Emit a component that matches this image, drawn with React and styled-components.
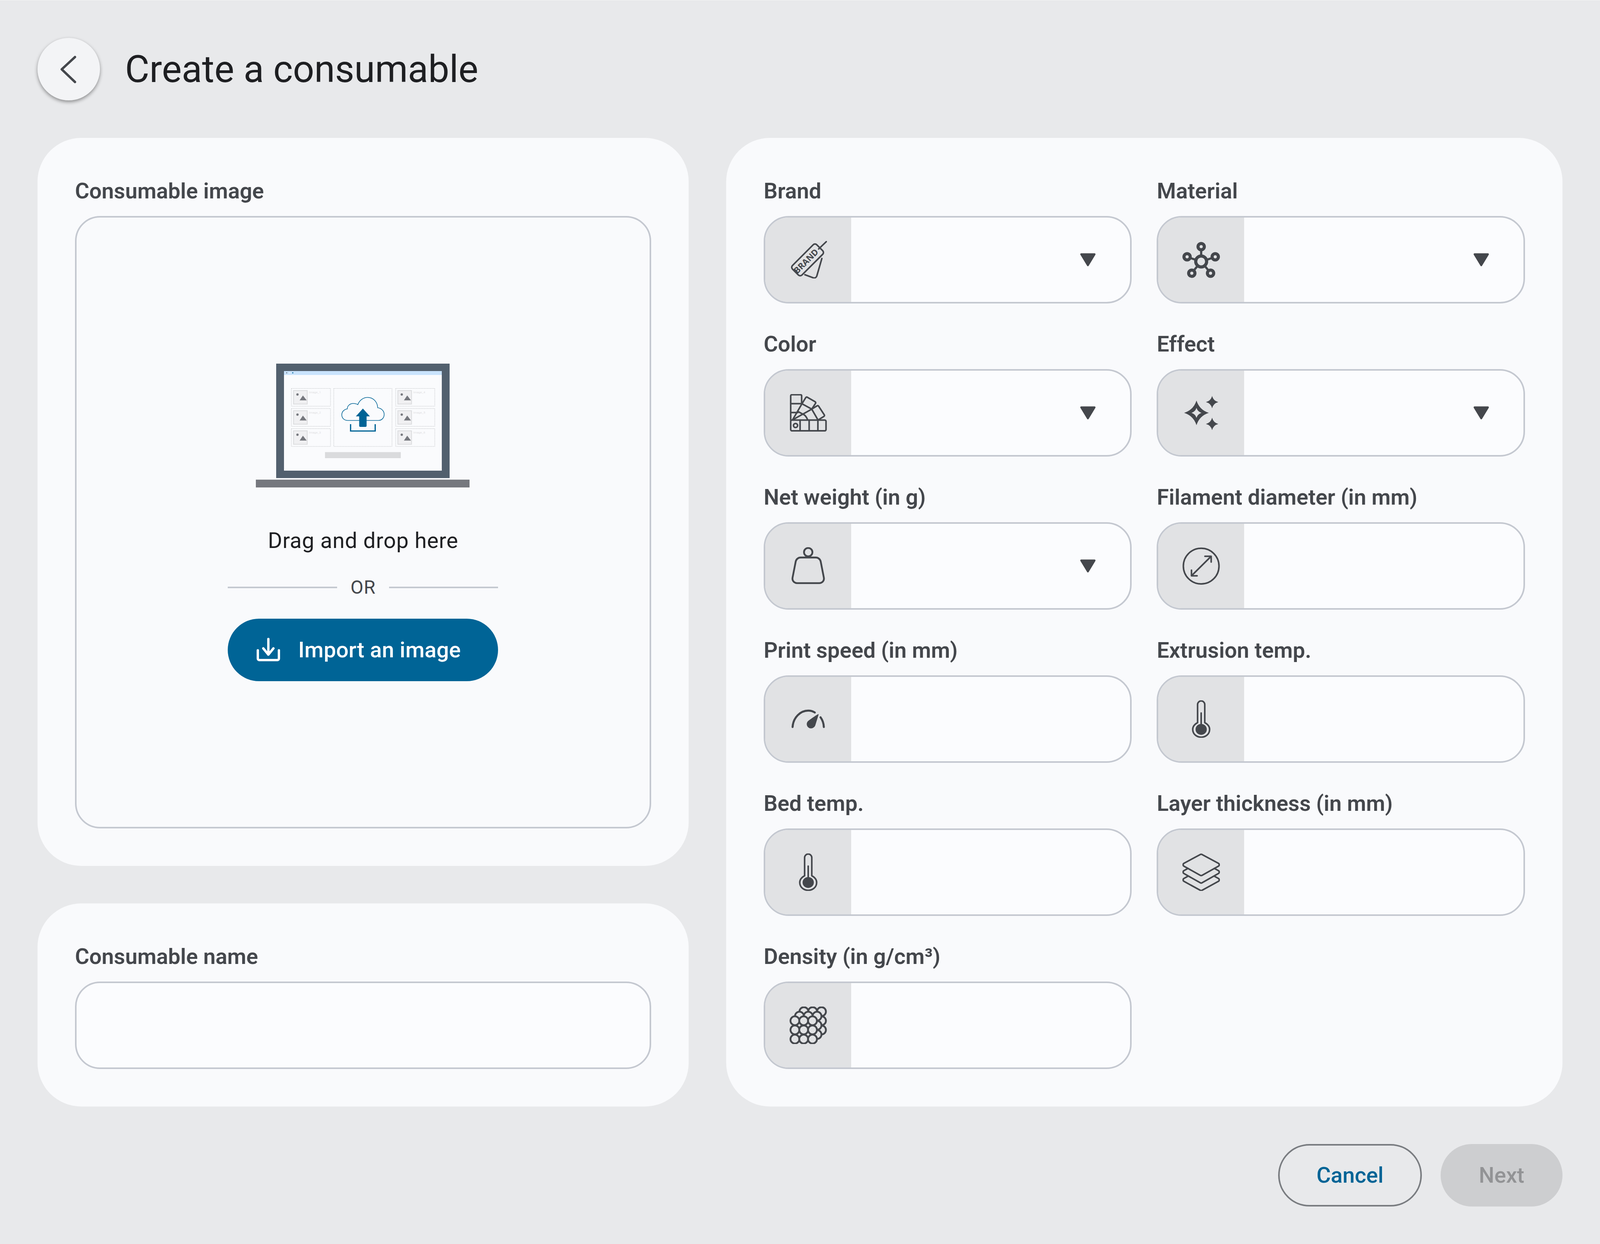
import React from 'react';
import styled, { createGlobalStyle } from 'styled-components';

const GlobalStyle = createGlobalStyle`
  html, body {
    margin: 0;
    padding: 0;
    background: #e8e9eb;
  }
  * {
    box-sizing: border-box;
  }
`;

const Page = styled.div`
  width: 100%;
  min-height: 100vh;
  padding: 96px;
  background: #e8e9eb;
  border-top: 1px solid #f4f4f5;
  font-family: Roboto, "Liberation Sans", sans-serif;
  color: #44474c;
`;

const Header = styled.header`
  display: flex;
  align-items: center;
  gap: 64px;
  height: 160px;
  margin-bottom: 96px;
`;

const BackButton = styled.button`
  display: flex;
  align-items: center;
  justify-content: center;
  width: 160px;
  height: 160px;
  padding: 0;
  border: none;
  border-radius: 50%;
  background: #f3f4f6;
  box-shadow: 0 4px 10px rgba(0, 0, 0, 0.4);
`;

const Title = styled.h1`
  margin: 0;
  font-size: 96px;
  line-height: 128px;
  font-weight: 400;
  color: #1e1f22;
`;

const Main = styled.main`
  display: grid;
  grid-template-columns: minmax(0, 1800fr) minmax(0, 2312fr);
  gap: 96px;
`;

const LeftColumn = styled.div`
  display: flex;
  flex-direction: column;
  gap: 96px;
`;

const Card = styled.section`
  display: flex;
  flex-direction: column;
  flex: ${(p) => (p.$grow ? 1 : 'none')};
  padding: 96px;
  background: #f9fafc;
  border-radius: 112px;
`;

const FieldGrid = styled.div`
  display: grid;
  grid-template-columns: repeat(2, minmax(0, 1fr));
  gap: 64px;
`;

const Field = styled.div`
  display: flex;
  flex-direction: column;
  flex: ${(p) => (p.$grow ? 1 : 'none')};
`;

const Label = styled.label`
  display: block;
  height: 80px;
  margin-bottom: 24px;
  font-size: 56px;
  line-height: 80px;
  font-weight: 600;
  color: #44474c;
`;

const InputBox = styled.div`
  display: flex;
  align-items: center;
  height: 224px;
  border: 4px solid #c4c8d0;
  border-radius: 64px;
  overflow: hidden;
  background: #fbfcfe;
`;

const IconCell = styled.div`
  display: flex;
  flex: none;
  align-items: center;
  justify-content: center;
  width: 220px;
  height: 100%;
  background: #e1e2e4;
`;

const InputSpace = styled.div`
  flex: 1;
`;

const Caret = styled.svg`
  flex: none;
  width: 42px;
  height: 34px;
  margin-right: 87px;
  fill: #44474c;
  stroke: #44474c;
  stroke-width: 5;
  stroke-linejoin: round;
`;

const Glyph = styled.svg`
  display: block;
  width: 96px;
  height: 96px;
  fill: none;
  stroke: #44474c;
  stroke-width: ${(p) => p.$stroke || 1};
  stroke-linecap: round;
  stroke-linejoin: round;
`;

const Solid = styled.g`
  fill: #44474c;
  stroke: none;
`;

const BrandWord = styled.text`
  fill: #44474c;
  stroke: none;
  font-family: "Noto Sans", "Open Sans", sans-serif;
  font-size: 5.5px;
  font-weight: 700;
`;

const DropZone = styled.div`
  display: flex;
  flex: 1;
  flex-direction: column;
  align-items: center;
  justify-content: center;
  border: 4px solid #c4c8d0;
  border-radius: 64px;
`;

const Illustration = styled.svg`
  display: block;
  width: 548px;
  height: 317px;
  margin-bottom: 96px;
`;

const ThumbLabel = styled.text`
  fill: #dfe0e2;
  font-family: Roboto, sans-serif;
  font-size: 8px;
`;

const DropText = styled.div`
  height: 80px;
  font-size: 56px;
  line-height: 80px;
  letter-spacing: 0.8px;
  color: #1e1f22;
`;

const OrRow = styled.div`
  display: flex;
  align-items: center;
  gap: 34px;
  width: 692px;
  height: 64px;
  margin: 48px 0;
  font-size: 48px;
  line-height: 64px;
  letter-spacing: 1px;
  color: #44474c;
`;

const OrLine = styled.span`
  display: block;
  flex: 1;
  height: 4px;
  background: #c4c8d0;
`;

const PrimaryButton = styled.button`
  display: flex;
  align-items: center;
  gap: 46px;
  width: 692px;
  height: 160px;
  padding: 0 0 0 74px;
  border: none;
  border-radius: 80px;
  background: #006496;
  color: #ffffff;
  font-family: inherit;
  font-size: 56px;
  font-weight: 500;
  letter-spacing: 0.3px;
`;

const Footer = styled.footer`
  display: flex;
  justify-content: flex-end;
  gap: 48px;
  margin-top: 96px;
`;

const FooterButton = styled.button`
  width: ${(p) => p.$w}px;
  height: 160px;
  padding: 0;
  border: ${(p) => (p.$outlined ? '4px solid #797c80' : 'none')};
  border-radius: 80px;
  background: ${(p) => (p.$outlined ? 'transparent' : '#cdced0')};
  color: ${(p) => (p.$outlined ? '#006496' : '#929395')};
  font-family: inherit;
  font-size: 56px;
  font-weight: 500;
`;

const BrandIcon = () => (
  <Glyph viewBox="0 0 24 24">
    <path d="M20.75 11.2 17.5 22.4c-.3.9-1.2 1.5-2.2 1.2L9.9 21.6" />
    <rect x="0.6" y="7.8" width="22" height="8.6" rx="1.6" transform="rotate(-45 11.6 12.1)" />
    <path d="M18.7 5.1 23.6.4" />
    <BrandWord x="10.6" y="14.9" textAnchor="middle" transform="rotate(-45 10.6 12.9)">
      BRAND
    </BrandWord>
  </Glyph>
);

const MaterialIcon = () => (
  <Glyph viewBox="0 0 24 24" $stroke={2}>
    <circle cx="12" cy="13.1" r="3.5" />
    <circle cx="12" cy="3.6" r="2" />
    <circle cx="3" cy="10.1" r="2" />
    <circle cx="21" cy="10.1" r="2" />
    <circle cx="6" cy="20.6" r="2" />
    <circle cx="18" cy="20.6" r="2" />
    <path d="M12 5.6v4M5 10.9l3.7 1.2M19 10.9l-3.7 1.2M7.2 19l2.8-3.4M16.8 19 14 15.6" strokeWidth="1.4" />
  </Glyph>
);

const ColorIcon = () => (
  <Glyph viewBox="0 0 24 24">
    <rect x="0.8" y="16.6" width="22.6" height="6.9" rx="0.8" />
    <path d="M6.8 16.6v6.9M12.6 16.6v6.9M18.2 16.6v6.9" />
    <circle cx="3.9" cy="20.1" r="1.3" />
    <path d="M.8 16.6V1.2c0-.5.3-.8.8-.8h5.4c.5 0 .8.3.8.8v4.9H.8M.8 11.8h4.6" />
    <path d="M2 16.5 8 6.2l2.4-3.9c.2-.4.7-.5 1-.3l5 2.9c.4.2.5.7.3 1l-2.4 3.7L8 6.2" />
    <path d="M2 16.5l12.3-6.9 3.4-2.1c.4-.2.8-.1 1 .3l3.6 5.5c.2.4.1.8-.3 1l-3.7 2.3-4-6.9" />
    <path d="M5.4 11.1l4.2 2.3c.9.8 1.6 2 2 3" />
  </Glyph>
);

const star = (cx, cy, r, k) => {
  const c = r * k;
  return `M${cx} ${cy - r}Q${cx + c} ${cy - c} ${cx + r} ${cy}Q${cx + c} ${cy + c} ${cx} ${cy + r}Q${cx - c} ${cy + c} ${cx - r} ${cy}Q${cx - c} ${cy - c} ${cx} ${cy - r}Z`;
};

const EffectIcon = () => (
  <Glyph viewBox="0 0 24 24">
    <Solid>
      <path fillRule="evenodd" d={`${star(9, 12, 7.9, 0.24)}${star(9, 12, 3.2, 0.24)}`} />
      <path d={star(19, 5.1, 3.95, 0.2)} />
      <path d={star(19, 19.1, 3.95, 0.2)} />
    </Solid>
  </Glyph>
);

const WeightIcon = () => (
  <Glyph viewBox="0 0 24 24" $stroke={1.15}>
    <circle cx="12" cy="3.2" r="2.7" />
    <path d="M7.2 6.6h9.6c1.6 0 2.9 1.1 3.2 2.6l2 10.200c.4 2-1 3.600-3 3.600H5c-2 0-3.400-1.600-3-3.600l2-10.200C4.300 7.700 5.600 6.600 7.200 6.600Z" />
  </Glyph>
);

const DiameterIcon = () => (
  <Glyph viewBox="0 0 24 24">
    <circle cx="12" cy="12.1" r="11.4" />
    <path d="M6.1 18 18.2 6M14.4 5.800h4v3.700M5.800 14.700v3.600h3.600" />
  </Glyph>
);

const SpeedIcon = () => (
  <Glyph viewBox="0 0 24 24" $stroke={1.3}>
    <path d="M2 17.100C2.400 11 7 6.600 12 6.600c1.500 0 3 .4 4.200 1.200M19.900 10.900c1.300 1.800 2 3.900 2.100 6.200" />
    <Solid>
      <path d="M18.400 8.800c.3 0 .3.300.2.500l-2 6.500c-.5 1.700-2.200 2.500-3.800 2-1.800-.7-2.300-3-1-4.400.7-.7 4.700-3.500 6.600-4.600Z" />
    </Solid>
  </Glyph>
);

const ThermoIcon = () => (
  <Glyph viewBox="0 0 24 24">
    <path d="M9.700 14.300V2.700a2.300 2.300 0 0 1 4.600 0v11.600c1.900 1 3.100 2.500 3.100 4.300 0 2.900-2.400 5-5.400 5s-5.400-2.100-5.400-5c0-1.800 1.200-3.300 3.100-4.300Z" />
    <path d="M12 8.100v7" />
    <Solid>
      <ellipse cx="12" cy="18.600" rx="3.600" ry="3.500" />
    </Solid>
  </Glyph>
);

const LayersIcon = () => (
  <Glyph viewBox="0 0 24 24">
    <path d="M11.600.6 1 6.300c-.8.500-.8 1.400 0 1.900l10.600 5.900c.3.100.5.100.8 0L23 8.200c.8-.5.8-1.400 0-1.900L12.400.6c-.3-.1-.5-.1-.8 0Z" />
    <path d="M3.500 9.600 1 11c-.8.500-.8 1.400 0 1.900l10.600 6c.3.100.5.100.8 0L23 12.900c.8-.5.8-1.400 0-1.900l-2.500-1.400" />
    <path d="M3.500 14.600 1 16c-.8.500-.8 1.400 0 1.900l10.600 5.800c.3.100.5.100.8 0L23 17.900c.8-.5.8-1.400 0-1.900l-2.500-1.400" />
  </Glyph>
);

// three stacked sheets of balls, back to front
const densityLayers = [
  { dx: 5.75, dy: -5.85 },
  { dx: 2.9, dy: -2.95 },
  { dx: 0, dy: 0 },
];

const DensityIcon = () => (
  <Glyph viewBox="0 0 24 24" $stroke={1.15}>
    {densityLayers.map((layer) =>
      [9.1, 14.95, 20.85].map((cy) =>
        [3.5, 9.1, 14.75].map((cx) => (
          <circle
            key={`${layer.dx}-${cx}-${cy}`}
            cx={cx + layer.dx}
            cy={cy + layer.dy}
            r="2.85"
            fill="#e1e2e4"
          />
        ))
      )
    )}
  </Glyph>
);

const DropdownCaret = () => (
  <Caret viewBox="0 0 42 34">
    <path d="M4 3h34L21 31Z" />
  </Caret>
);

const BackChevron = () => (
  <svg width="160" height="160" viewBox="0 0 160 160" fill="none" stroke="#44474c" strokeWidth="6" strokeLinecap="round" strokeLinejoin="round">
    <path d="M96 49 62 80.500 96 113" />
  </svg>
);

const DownloadIcon = () => (
  <svg width="60" height="61" viewBox="0 0 60 61" fill="none" stroke="#ffffff" strokeWidth="6" strokeLinecap="round" strokeLinejoin="round">
    <path d="M30 3v40M17 27l13 16 13-16" />
    <path d="M3 32v21a4 4 0 0 0 4 4h46a4 4 0 0 0 4-4V32" />
  </svg>
);

const thumbs = [
  { x: 813, y: 996.5, name: 'Image_1' },
  { x: 813, y: 1048, name: 'Image_2' },
  { x: 813, y: 1099.5, name: 'Image_3' },
  { x: 1080, y: 996.5, name: 'Image_4' },
  { x: 1080, y: 1048, name: 'Image_5' },
  { x: 1080, y: 1099.5, name: 'Image_6' },
];

const LaptopIllustration = () => (
  <Illustration viewBox="722 933 548 317">
    <rect x="774" y="933" width="444" height="293" fill="#52606e" />
    <rect x="794" y="952" width="404" height="255" fill="#fafbfd" />
    <rect x="794" y="952" width="404" height="10" fill="#c9e3fd" />
    <circle cx="801" cy="956.5" r="1.5" fill="#6b7280" />
    <circle cx="809" cy="956.5" r="1.5" fill="#eef4fb" />
    <circle cx="816.5" cy="956.5" r="1.5" fill="#006496" />
    <rect x="722" y="1230" width="547" height="20" fill="#76787e" />
    {thumbs.map((t) => (
      <g key={t.name}>
        <rect x={t.x} y={t.y} width="100" height="45.5" fill="none" stroke="#b8babd" strokeWidth="0.9" strokeDasharray="2.5 1.5" />
        <rect x={t.x + 5.5} y={t.y + 5.5} width="35" height="34.5" fill="#f0f0f2" stroke="#dadbdd" strokeWidth="2" />
        <circle cx={t.x + 15.5} cy={t.y + 15.5} r="3" fill="#76787e" />
        <path d={`M${t.x + 29.5} ${t.y + 18}l9.5 12.5h-18Z`} fill="#76787e" />
        <ThumbLabel x={t.x + 45} y={t.y + 12.5}>{t.name}</ThumbLabel>
      </g>
    ))}
    <rect x="921.5" y="996.5" width="149" height="148.5" fill="none" stroke="#b8babd" strokeWidth="0.9" strokeDasharray="2.5 1.5" />
    <path
      d="M957 1078.5C948 1078.5 942 1072 942 1064C942 1056 948 1050 956 1049C956 1041 963 1035 971 1035C975 1035 980 1036 983 1038C987 1027 997 1019.5 1008 1019.5C1022 1019.5 1033 1030 1034 1046C1043 1047 1050.5 1054 1050.5 1063C1050.5 1072 1044 1078.5 1036 1078.5Z"
      fill="none"
      stroke="#006496"
      strokeWidth="1.6"
    />
    <path d="M996 1048 1014 1068H1005.5V1092a3 3 0 0 1-3 3h-13a3 3 0 0 1-3-3V1068H978Z" fill="#006496" />
    <path d="M964.5 1088v17.5h63V1088" fill="none" stroke="#006496" strokeWidth="3.2" />
    <rect x="899" y="1159.5" width="194" height="15.5" fill="#dadbdd" />
  </Illustration>
);

const fields = [
  { label: 'Brand', icon: BrandIcon, select: true },
  { label: 'Material', icon: MaterialIcon, select: true },
  { label: 'Color', icon: ColorIcon, select: true },
  { label: 'Effect', icon: EffectIcon, select: true },
  { label: 'Net weight (in g)', icon: WeightIcon, select: true },
  { label: 'Filament diameter (in mm)', icon: DiameterIcon },
  { label: 'Print speed (in mm)', icon: SpeedIcon },
  { label: 'Extrusion temp.', icon: ThermoIcon },
  { label: 'Bed temp.', icon: ThermoIcon },
  { label: 'Layer thickness (in mm)', icon: LayersIcon },
  { label: 'Density (in g/cm³)', icon: DensityIcon },
];

export default function App() {
  return (
    <Page>
      <GlobalStyle />
      <Header>
        <BackButton aria-label="Back">
          <BackChevron />
        </BackButton>
        <Title>Create a consumable</Title>
      </Header>
      <Main>
        <LeftColumn>
          <Card $grow>
            <Field $grow>
              <Label>Consumable image</Label>
              <DropZone>
                <LaptopIllustration />
                <DropText>Drag and drop here</DropText>
                <OrRow>
                  <OrLine />
                  OR
                  <OrLine />
                </OrRow>
                <PrimaryButton>
                  <DownloadIcon />
                  Import an image
                </PrimaryButton>
              </DropZone>
            </Field>
          </Card>
          <Card>
            <Field>
              <Label>Consumable name</Label>
              <InputBox />
            </Field>
          </Card>
        </LeftColumn>
        <Card>
          <FieldGrid>
            {fields.map(({ label, icon: Icon, select }) => (
              <Field key={label}>
                <Label>{label}</Label>
                <InputBox>
                  <IconCell>
                    <Icon />
                  </IconCell>
                  <InputSpace />
                  {select && <DropdownCaret />}
                </InputBox>
              </Field>
            ))}
          </FieldGrid>
        </Card>
      </Main>
      <Footer>
        <FooterButton $outlined $w={368}>Cancel</FooterButton>
        <FooterButton $w={312}>Next</FooterButton>
      </Footer>
    </Page>
  );
}
